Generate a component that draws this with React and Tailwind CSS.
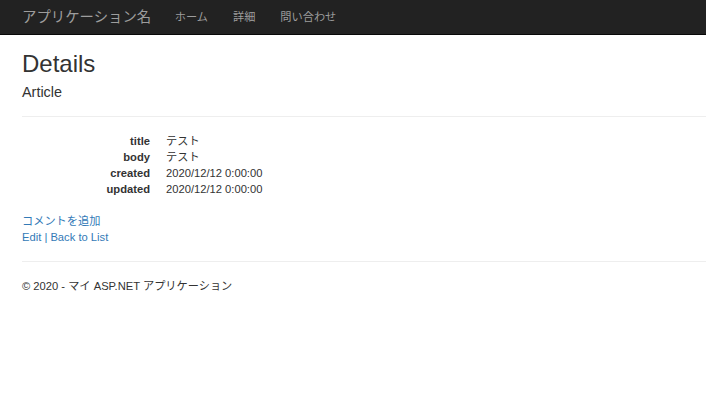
export default function App() {
  const font = { fontFamily: '"Liberation Sans", "Noto Sans CJK JP", Arial, sans-serif' };
  const rows = [
    ["title", "テスト"],
    ["body", "テスト"],
    ["created", "2020/12/12 0:00:00"],
    ["updated", "2020/12/12 0:00:00"],
  ];
  return (
    <div className="min-h-[416px] bg-white text-[#333] text-[11.2px] leading-[16px] font-['Liberation_Sans','Noto_Sans_CJK_JP',Arial,sans-serif]" style={font}>
      <nav className="h-[35px] bg-[#222] border-b border-[#080808] flex items-center pl-[22px]">
        <span className="text-[14.4px] text-[#9d9d9d] pr-[11px] leading-[20px]">アプリケーション名</span>
        <a className="text-[11.2px] text-[#9d9d9d] px-[12.5px]">ホーム</a>
        <a className="text-[11.2px] text-[#9d9d9d] px-[12.5px]">詳細</a>
        <a className="text-[11.2px] text-[#9d9d9d] px-[12.5px]">問い合わせ</a>
      </nav>
      <div className="pl-[22px] pt-[16px]">
        <h2 className="text-[24px] leading-[26.4px] font-normal mb-[8px]">Details</h2>
        <h4 className="text-[14.4px] leading-[15.8px] font-normal">Article</h4>
        <div className="mt-[15px] mb-[16px] border-t border-[#eee]" />
        <dl className="mb-[16px]">
          {rows.map(([k, v]) => (
            <div key={k} className="flex">
              <dt className="w-[128px] text-right font-bold">{k}</dt>
              <dd className="ml-[16px]">{v}</dd>
            </div>
          ))}
        </dl>
        <div>
          <a className="text-[#337ab7]">コメントを追加</a>
        </div>
        <div className="text-[#337ab7]">
          <a>Edit</a> | <a>Back to List</a>
        </div>
        <div className="mt-[16px] mb-[16px] border-t border-[#eee]" />
        <footer>
          <p>© 2020 - マイ ASP.NET アプリケーション</p>
        </footer>
      </div>
    </div>
  );
}
